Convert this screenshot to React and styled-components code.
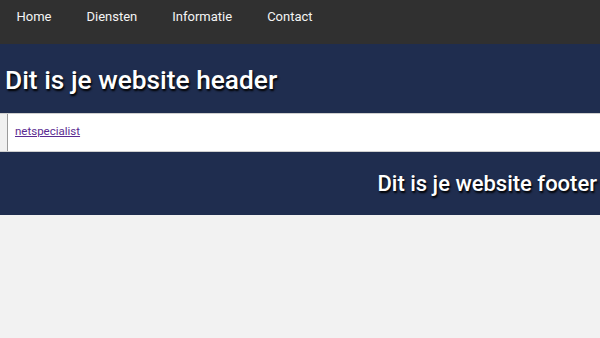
import styled, { createGlobalStyle } from 'styled-components';

const GlobalStyle = createGlobalStyle`
  body {
    margin: 0;
    background: #f2f2f2;
    font-family: 'Roboto', 'Liberation Sans', sans-serif;
  }
`;

export default function App() {
  return (
    <>
      <GlobalStyle />
      <Nav>
        <NavLink href="#">Home</NavLink>
        <NavLink href="#">Diensten</NavLink>
        <NavLink href="#">Informatie</NavLink>
        <NavLink href="#">Contact</NavLink>
      </Nav>
      <Header>
        <HeaderTitle>Dit is je website header</HeaderTitle>
      </Header>
      <ContentRow>
        <Sidebar />
        <Main>
          <TextLink href="#">netspecialist</TextLink>
        </Main>
      </ContentRow>
      <Footer>
        <FooterTitle>Dit is je website footer</FooterTitle>
      </Footer>
    </>
  );
}

const Nav = styled.nav`
  display: flex;
  height: 44px;
  background: #303030;
  padding-left: 0;
`;

const NavLink = styled.a`
  display: block;
  padding: 8px 17.5px 0;
  height: 36px;
  color: #f4f4f4;
  font-size: 13px;
  line-height: 17px;
  text-decoration: none;

  &:first-child {
    padding-left: 16.5px;
  }
`;

const Header = styled.header`
  height: 69px;
  background: #1f2d4f;
  display: flex;
  align-items: center;
  padding: 0 5px;
`;

const HeaderTitle = styled.h1`
  margin: 0;
  font-size: 26.3px;
  font-weight: 500;
  color: #fff;
  text-shadow: 1px 2px 2px #000;
  padding-top: 2px;
`;

const ContentRow = styled.div`
  display: flex;
  height: 39px;
  background: #fff;
  border-top: 1px solid #cfcfcf;
  border-bottom: 1px solid #cfcfcf;
  box-sizing: border-box;
`;

const Sidebar = styled.aside`
  width: 7px;
  background: #f0f0f0;
  border-right: 1px solid #9a9a9a;
`;

const Main = styled.main`
  flex: 1;
  padding: 6px 0 0 7px;
`;

const TextLink = styled.a`
  color: #5b2a91;
  font-size: 11.5px;
  line-height: 15px;
`;

const Footer = styled.footer`
  height: 63px;
  background: #1f2d4f;
  display: flex;
  align-items: center;
  justify-content: flex-end;
  padding-right: 3px;
`;

const FooterTitle = styled.h2`
  margin: 0;
  font-size: 22px;
  font-weight: 500;
  color: #fff;
  text-shadow: 1px 2px 2px #000;
`;
